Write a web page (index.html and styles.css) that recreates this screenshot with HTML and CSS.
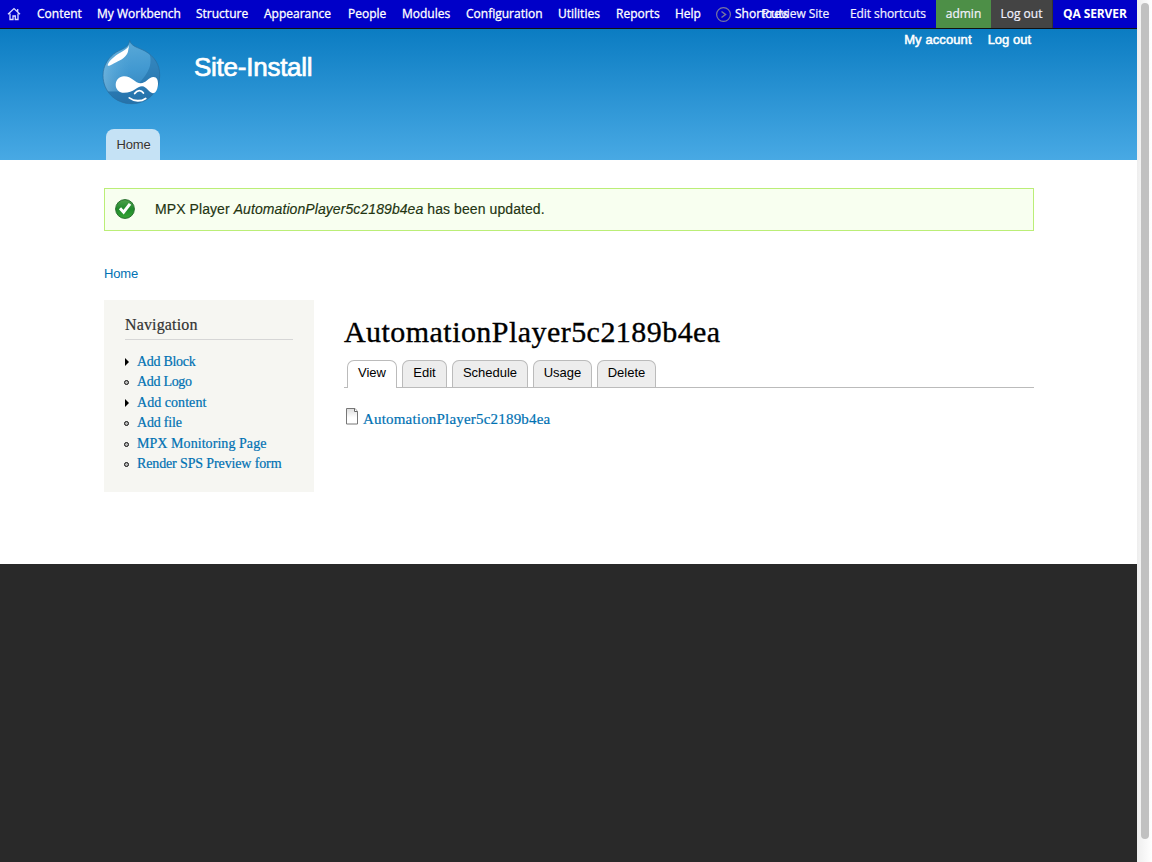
FILE: index.html
```html
<!DOCTYPE html>
<html lang="en">
<head>
<meta charset="utf-8">
<title>AutomationPlayer5c2189b4ea | Site-Install</title>
<link rel="stylesheet" href="styles.css">
</head>
<body>
<div class="window">
<div class="page">
  <nav class="toolbar">
    <div class="menu">
      <a class="home-icon"><svg width="14" height="14" viewBox="0 0 14 14" fill="none" stroke="#dcdcff" stroke-width="1.3"><path d="M1 7.2 7 1.6l6 5.6M3 6.5v6h3V9h2.3v3.500H11v-6M10.700 2v3"/></svg></a>
      <a>Content</a><a class="workbench">My Workbench</a><a>Structure</a><a>Appearance</a><a>People</a><a>Modules</a><a>Configuration</a><a>Utilities</a><a>Reports</a><a>Help</a>
      <a class="shortcuts"><svg width="16" height="16" viewBox="0 0 16 16" fill="none" stroke="#7777a0"><circle cx="7.500" cy="8.500" r="6.900" stroke-width="1.2"/><path d="M5.500 5.500l4 3-4 3" stroke-width="1.5"/></svg><span>Shortcuts</span></a>
    </div>
    <div class="tools"><a class="preview">Preview Site</a><a class="edit-shortcuts">Edit shortcuts</a><a class="user">admin</a><a class="logout">Log out</a><a class="server">QA SERVER</a></div>
  </nav>
  <header class="header">
    <div class="account"><a class="my-account">My account</a><a class="account-out">Log out</a></div>
    <div class="brand">
      <svg class="logo" width="60" height="67" viewBox="0 0 60 67">
        <defs>
          <linearGradient id="drop" x1="0" y1="0" x2=".1" y2="1"><stop offset="0" stop-color="#5eacd9"/><stop offset=".5" stop-color="#4299d1"/><stop offset="1" stop-color="#327fb6"/></linearGradient>
          <linearGradient id="left" x1="0" y1="0" x2="1" y2="0"><stop offset="0" stop-color="#8bc5e5" stop-opacity=".6"/><stop offset=".8" stop-color="#5baada" stop-opacity="0"/></linearGradient>
          <clipPath id="shape"><path d="M28.700 1.300C29.500 7 37 8.500 44 12 53.500 17.500 58.700 25.500 58.700 36 58.700 53 46.500 64.700 30.500 64.700S2 52.500 2 36.500C2 26.500 7.500 18 15.500 13 23 9 28 8 28.700 1.300Z"/></clipPath>
        </defs>
        <g clip-path="url(#shape)">
          <path d="M0 0H60V67H0Z" fill="url(#drop)"/>
          <path d="M0 10H38V52.500H0Z" fill="url(#left)"/>
          <path d="M48 13c4 11 0 20-8 29-5 6-10 10.500-18 10.500H0V67H60V13Z" fill="#155f99" opacity=".4"/>
        </g>
        <path d="M28.700 1.300C29.500 7 37 8.500 44 12 53.500 17.500 58.700 25.500 58.700 36 58.700 53 46.500 64.700 30.500 64.700S2 52.500 2 36.500C2 26.500 7.500 18 15.500 13 23 9 28 8 28.700 1.300Z" fill="none" stroke="#286f9f" stroke-width=".7"/>
        <path d="M28.600 3.500C28.500 9 23 11.500 17 15 11 19 6.500 24 6.700 26.500 8 27.500 11 25.500 17 22.300 23 19.500 26 16.500 27 12.500Z" fill="#fff"/>
        <path d="M23 37.300c8 0 11 7 16.700 7 5 0 8-6 12.800-6.300 3.500 0 4.500 3 4.500 6.500 0 5-2 9.700-5 9.700-4 0-6-6.700-11-6.900-5 0-8 6.500-18 6.500-5 0-8.300-3.500-8.300-7.800 0-5 3.500-8.700 8.300-8.700Z" fill="#fff"/>
        <path d="M33.700 54.500c2.500-3.800 6.500-3.800 8.700-.5M28.300 58.900c5 3.800 12 3.600 16.400.5" fill="none" stroke="#fff" stroke-width="1.800" stroke-linecap="round"/>
      </svg>
      <div class="site-name">Site-Install</div>
    </div>
    <a class="main-tab"><span>Home</span></a>
  </header>
  <main class="body">
    <div class="status">
      <svg width="20" height="20" viewBox="0 0 20 20"><defs><linearGradient id="ok" x2="0" y2="1"><stop stop-color="#4fa04d"/><stop offset=".5" stop-color="#1f8a2b"/><stop offset="1" stop-color="#36a634"/></linearGradient></defs><circle cx="10" cy="10" r="9.400" fill="url(#ok)" stroke="#286f2f"/><path d="M5 9.200 8.600 13.200 15 4.800" fill="none" stroke="#fff" stroke-width="3"/></svg>
      <div class="message">MPX Player <em>AutomationPlayer5c2189b4ea</em> has been updated.</div>
    </div>
    <div class="breadcrumb"><a>Home</a></div>
    <div class="columns">
      <aside class="sidebar">
        <h2><span>Navigation</span></h2>
        <ul>
          <li class="more"><a class="n1">Add Block</a></li><li><a class="n2">Add Logo</a></li><li class="more"><a class="n3">Add content</a></li><li><a class="n4">Add file</a></li><li><a class="n5">MPX Monitoring Page</a></li><li><a class="n6">Render SPS Preview form</a></li>
        </ul>
      </aside>
      <section class="content">
        <h1><span>AutomationPlayer5c2189b4ea</span></h1>
        <div class="tabs"><a class="active">View</a><a class="t-edit">Edit</a><a class="t-schedule">Schedule</a><a class="t-usage">Usage</a><a class="t-delete">Delete</a></div>
        <div class="file"><svg width="13" height="17" viewBox="0 0 13 17"><defs><linearGradient id="doc" x2="0" y2="1"><stop stop-color="#ddd"/><stop offset=".6" stop-color="#fff"/></linearGradient></defs><path d="M.5.500H9L11.500 3.500v12.500H.5Z" fill="url(#doc)" stroke="#777"/><path d="M8.500.500V3.500h3" fill="#fff" stroke="#666"/></svg><a>AutomationPlayer5c2189b4ea</a></div>
      </section>
    </div>
  </main>
</div>
<div class="scrollbar"><div class="thumb"></div></div>
</div>
</body>
</html>
```
FILE: styles.css
```css
body { margin: 0; background: #292929; font-family: "Liberation Sans", Arial, sans-serif; overflow: hidden; }
.window { display: flex; height: 862px; }
.page { width: 1137px; }
.toolbar { position: relative; height: 29px; box-sizing: border-box; background: #0000c8; border-bottom: 1px solid #111; font: 500 12px/28px "Open Sans", sans-serif; color: #fff; white-space: nowrap; }
.menu { display: grid; grid-template-columns: 37px 60px 99px 68px 84px 54px 64px 92px 58px 59px 41px 90px; -webkit-text-stroke: .3px #fff; }
.home-icon { padding: 7px 0 0 7px; line-height: 0; }
.shortcuts { display: flex; gap: 3px; }
.shortcuts svg { margin-top: 6px; }
.tools { position: absolute; top: 0; right: 0; display: flex; font-weight: 400; color: #f2f2ff; -webkit-text-stroke: .2px #f2f2ff; }
.preview { width: 88px; letter-spacing: -.04px; }
.edit-shortcuts { width: 86px; letter-spacing: -.08px; }
.user { width: 55px; text-align: center; background: #4d8f47; }
.logout { width: 62px; text-align: center; background: #444; border-right: 1px solid #333; box-sizing: border-box; }
.server { width: 84px; box-sizing: border-box; padding-left: 10px; color: #fff; font-weight: 700; letter-spacing: -.1px; -webkit-text-stroke: 0; }
.header { height: 131px; box-sizing: border-box; padding: 0 103px 0 101px; background: linear-gradient(#0b7cc2, #48a9e4); color: #fff; display: flex; flex-direction: column; }
.account { display: flex; justify-content: flex-end; gap: 16px; height: 10px; font-size: 13px; line-height: 22px; padding-right: 3px; -webkit-text-stroke: .5px #fff; }
.my-account { letter-spacing: .1px; }
.brand { display: flex; height: 90px; }
.logo { display: block; }
.site-name { margin: 13px 0 0 33px; font-size: 26px; line-height: 30px; letter-spacing: -.25px; -webkit-text-stroke: .7px #fff; }
.main-tab { width: 54px; height: 31px; margin-left: 5px; border-radius: 8px 8px 0 0; background: #c5e2f5; color: #333; font-size: 13px; line-height: 31px; text-align: center; text-shadow: 0 1px #eee; letter-spacing: -.15px; text-indent: 1px; }
.body { height: 404px; box-sizing: border-box; padding: 28px 103px 0 104px; background: #fff; }
.status { display: flex; height: 43px; box-sizing: border-box; border: 1px solid #be7; background: #f8fff0; padding: 10px; gap: 20px; font-size: 14px; line-height: 21px; }
.message { color: #233410; letter-spacing: .08px; -webkit-text-stroke: .15px #233410; }
.breadcrumb { margin-top: 34px; height: 35px; font-size: 13px; line-height: 18px; letter-spacing: -.15px; color: #0071b3; }
.columns { display: flex; gap: 30px; font-family: "Liberation Serif", Georgia, serif; }
.sidebar { width: 210px; height: 192px; box-sizing: border-box; padding: 12px 21px; background: #f6f6f2; }
.sidebar h2 { margin: 0; height: 28px; box-sizing: border-box; border-bottom: 1px solid #d6d6d6; font-weight: 400; font-size: 16px; line-height: 25px; letter-spacing: .15px; color: #333; -webkit-text-stroke: .2px #333; }
.sidebar ul { list-style: none; margin: 11px 0 0; padding: 0; }
.sidebar li { height: 20.4px; padding-left: 12px; font-size: 14px; line-height: 21px; color: #0071b3; display: flex; white-space: nowrap; }
.sidebar a { -webkit-text-stroke: .2px #0071b3; }
.n1, .n2 { letter-spacing: -.3px; }
.n3 { letter-spacing: .05px; }
.n4 { letter-spacing: -.2px; }
.n5 { letter-spacing: .06px; }
.n6 { letter-spacing: -.13px; }
.sidebar li::before { content: ""; width: 3px; height: 3px; margin: 9px 8px 0 -13px; border: 1px solid #111; border-radius: 50%; background: #bbb; }
.sidebar li.more::before { width: 0; height: 0; margin: 7px 8px 0 -12px; border: solid transparent; border-width: 4px 0 4px 4px; border-left-color: #000; border-radius: 0; background: none; }
.content { width: 690px; }
.content h1 { margin: 12px 0 0; height: 47px; font-weight: 400; font-size: 30px; line-height: 40px; letter-spacing: .45px; color: #000; -webkit-text-stroke: .35px #000; }
.tabs { display: flex; gap: 5px; height: 29px; box-sizing: border-box; padding-left: 3px; border-bottom: 1px solid #bbb; font: 13px/25px "Liberation Sans", Arial, sans-serif; color: #000; }
.tabs a { height: 27px; box-sizing: border-box; border: 1px solid #bbb; border-bottom: 0; border-radius: 7px 7px 0 0; background: #ededed; text-align: center; margin-top: 1px; line-height: 24px; }
.tabs .active { width: 50px; height: 28px; background: #fff; position: relative; }
.t-edit { width: 45px; }
.t-schedule { width: 76px; }
.t-usage { width: 59px; }
.t-delete { width: 59px; }
.file { display: flex; gap: 4px; padding: 19px 0 0 2px; font-size: 15px; line-height: 24px; letter-spacing: .19px; color: #0071b3; }
.file svg { margin-top: 1px; }
.file a { -webkit-text-stroke: .2px #0071b3; }
.scrollbar { width: 15px; box-sizing: border-box; padding: 3px 3px 0 4px; background: linear-gradient(90deg, #eee, #fff); }
.thumb { height: 836px; border-radius: 4px; background: #c1c1c1; }
```
